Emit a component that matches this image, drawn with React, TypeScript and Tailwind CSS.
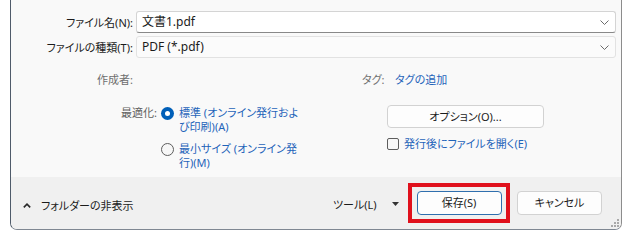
import React from 'react';

const ChevronDown = () => (
  <svg width="9" height="5" viewBox="0 0 9 5" className="shrink-0">
    <path d="M0.5 0.5 L4.5 4.5 L8.5 0.5" fill="none" stroke="#6b6b6b" strokeWidth="1" />
  </svg>
);

const ChevronUp = () => (
  <svg width="8" height="5" viewBox="0 0 8 5" className="shrink-0">
    <path d="M0.8 4.4 L4 1.2 L7.2 4.4" fill="none" stroke="#2a2a2a" strokeWidth="1.6" />
  </svg>
);

const Grip = () => (
  <svg width="10" height="10" viewBox="0 0 10 10">
    {[
      [8, 2],
      [5, 5],
      [8, 5],
      [2, 8],
      [5, 8],
      [8, 8],
    ].map(([x, y], i) => (
      <rect key={i} x={x - 1} y={y - 1} width="2" height="2" fill="#a9a9a9" />
    ))}
  </svg>
);

const Radio = ({ checked }: { checked?: boolean }) =>
  checked ? (
    <div className="mt-[1px] w-[13px] h-[13px] shrink-0 rounded-full bg-[#005fb8] flex items-center justify-center">
      <div className="w-[5px] h-[5px] rounded-full bg-white" />
    </div>
  ) : (
    <div className="mt-[1px] w-[13px] h-[13px] shrink-0 rounded-full border border-[#5d5d5d] bg-[#f7f7f7]" />
  );

const Combo = ({ value, active }: { value: string; active?: boolean }) => (
  <div
    className={
      active
        ? 'ml-[3px] flex-1 h-full flex items-center pl-[5px] pr-[6px] rounded-[3px] bg-white border border-[#d4d4d4] border-b-[#888888]'
        : 'ml-[3px] flex-1 h-full flex items-center pl-[5px] pr-[6px] rounded-[3px] bg-[#fbfbfb] border border-[#e2e2e2]'
    }
  >
    <span className="flex-1 text-[12px] text-[#1b1b1b]">{value}</span>
    <ChevronDown />
  </div>
);

// two-line radio caption, each line its own row
const Caption = ({ lines }: { lines: string[] }) => (
  <div className="flex flex-col text-[#1f64b9]">
    {lines.map((l) => (
      <div key={l} className="h-[14px] leading-[14px]">
        {l}
      </div>
    ))}
  </div>
);

export default function App() {
  return (
    <div className="w-[630px] h-[240px] bg-white overflow-hidden font-['Noto_Sans','Noto_Sans_CJK_JP',sans-serif] [font-feature-settings:'palt'] text-[11px] leading-[14px] text-[#1b1b1b]">
      <div className="relative ml-[10px] w-[612px] h-[230px] flex flex-col border-l border-r border-b border-l-[#4f5b6a] border-r-[#8c8c8c] border-b-[#7f8792] rounded-b-[7px] overflow-hidden">
        {/* main form area */}
        <div className="h-[177px] bg-[#f9f9f9] flex flex-col pr-[5px]">
          <div className="mt-[11px] h-[22px] flex items-center">
            <div className="w-[122px] text-right pt-[1px]">ファイル名(N):</div>
            <Combo value="文書1.pdf" active />
          </div>
          <div className="mt-[3px] h-[22px] flex items-center">
            <div className="w-[122px] text-right pt-[1px]">ファイルの種類(T):</div>
            <Combo value="PDF (*.pdf)" />
          </div>

          <div className="mt-[12px] h-[20px] flex items-center">
            <div className="w-[122px] text-right text-[#6e6e6e]">作成者:</div>
            <div className="ml-[229px] w-[33px] text-[#6e6e6e]">タグ:</div>
            <div className="text-[#1f64b9]">タグの追加</div>
          </div>

          <div className="mt-[15px] flex">
            <div className="w-[146px] mt-[1px] text-right text-[#5f5f5f]">最適化:</div>
            <div className="ml-[4px] w-[226px] flex flex-col gap-[8px] mt-[1px]">
              <div className="flex gap-[5px]">
                <Radio checked />
                <Caption lines={['標準 (オンライン発行およ', 'び印刷)(A)']} />
              </div>
              <div className="flex gap-[5px]">
                <Radio />
                <Caption lines={['最小サイズ (オンライン発', '行)(M)']} />
              </div>
            </div>
            <div className="flex flex-col">
              <button className="w-[157px] h-[23px] rounded-[4px] border border-[#d2d2d2] bg-[#fdfdfd] text-[#1b1b1b] flex items-center justify-center">
                オプション(O)...
              </button>
              <div className="mt-[9px] flex items-center gap-[5px]">
                <div className="w-[12px] h-[12px] rounded-[2px] border border-[#5d5d5d] bg-[#f7f7f7]" />
                <span className="text-[#1f64b9]">発行後にファイルを開く(E)</span>
              </div>
            </div>
          </div>
        </div>

        {/* footer */}
        <div className="h-[52px] bg-[#f0f0f0] flex items-center">
          <div className="ml-[12px] mt-[5px] flex items-center gap-[10px]">
            <ChevronUp />
            <span>フォルダーの非表示</span>
          </div>
          <div className="ml-auto mr-[19px] flex items-center">
            <span className="w-[59px] mt-[4px]">ツール(L)</span>
            <svg width="7" height="4" viewBox="0 0 7 4" className="shrink-0 mt-[2px]">
              <path d="M0 0 L7 0 L3.5 4 Z" fill="#333333" />
            </svg>
            <div className="ml-[9px] w-[102px] h-[40px] border-4 border-[#e0101c] flex items-center justify-center">
              <button className="w-[85px] h-[24px] rounded-[4px] border border-[#2f6fae] bg-[#fdfdfd] flex items-center justify-center">
                保存(S)
              </button>
            </div>
            <button className="ml-[7px] w-[85px] h-[24px] rounded-[4px] border border-[#d2d2d2] bg-[#fdfdfd] flex items-center justify-center">
              キャンセル
            </button>
          </div>
        </div>

        <div className="absolute right-[1px] bottom-[1px]">
          <Grip />
        </div>
      </div>
    </div>
  );
}
